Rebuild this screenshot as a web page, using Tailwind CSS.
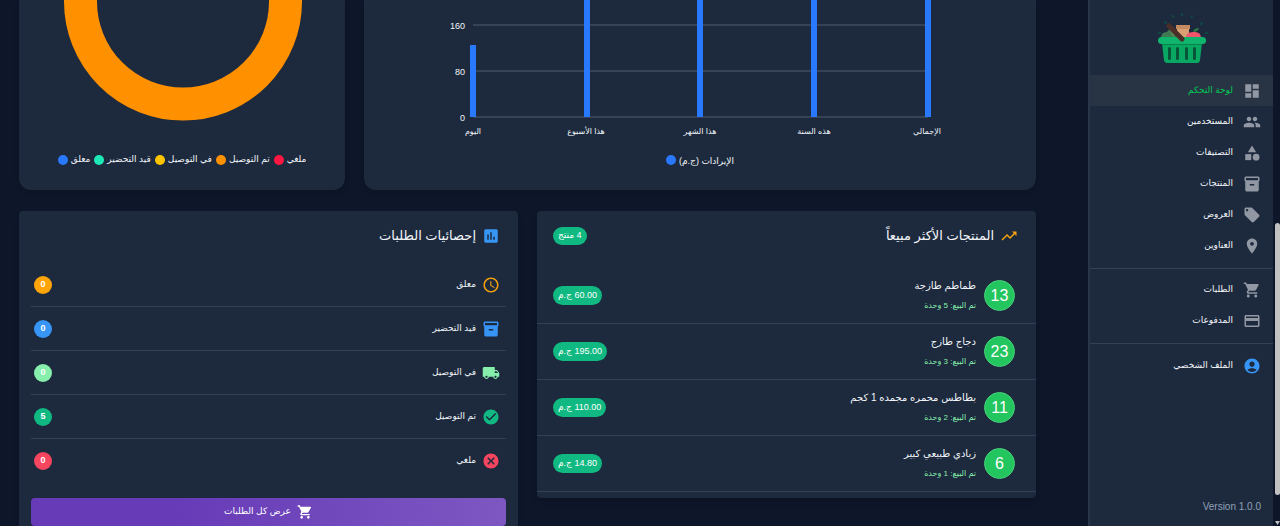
<!DOCTYPE html>
<html lang="ar" dir="rtl">
<head>
<meta charset="utf-8">
<title>لوحة التحكم</title>
<script src="https://cdn.jsdelivr.net/npm/@tailwindcss/browser@4"></script>
</head>
<body class="flex h-screen overflow-hidden bg-[#0e1729] font-['Liberation_Sans','DejaVu_Sans',sans-serif] text-[9px] text-slate-100">
<svg class="hidden" aria-hidden="true">
  <symbol id="dashboard" viewBox="0 0 24 24"><path d="M3 13h8V3H3v10zm0 8h8v-6H3v6zm10 0h8V11h-8v10zm0-18v6h8V3h-8z"/></symbol>
  <symbol id="people" viewBox="0 0 24 24"><path d="M16 11c1.66 0 2.99-1.34 2.99-3S17.660 5 16 5c-1.660 0-3 1.340-3 3s1.340 3 3 3zm-8 0c1.660 0 2.990-1.340 2.990-3S9.660 5 8 5C6.340 5 5 6.340 5 8s1.340 3 3 3zm0 2c-2.330 0-7 1.170-7 3.500V19h14v-2.500c0-2.330-4.670-3.500-7-3.500zm8 0c-.29 0-.62.020-.97.050 1.160.84 1.970 1.970 1.970 3.450V19h6v-2.500c0-2.330-4.670-3.500-7-3.500z"/></symbol>
  <symbol id="category" viewBox="0 0 24 24"><path d="M12 2 6.500 11h11z"/><circle cx="17.500" cy="17.500" r="4.500"/><path d="M3 13.500h8v8H3z"/></symbol>
  <symbol id="box" viewBox="0 0 24 24"><path fill-rule="evenodd" d="M20 2H4c-1 0-2 .9-2 2v3.010c0 .72.43 1.340 1 1.690V20c0 1.100 1.100 2 2 2h14c.9 0 2-.9 2-2V8.700c.57-.35 1-.97 1-1.690V4c0-1.100-1-2-2-2zm-5 12H9v-2h6v2zm5-7H4V4h16v3z"/></symbol>
  <symbol id="tag" viewBox="0 0 24 24"><path d="M21.410 11.580l-9-9C12.050 2.220 11.550 2 11 2H4c-1.100 0-2 .9-2 2v7c0 .55.22 1.050.59 1.420l9 9c.36.36.86.58 1.410.58.55 0 1.050-.22 1.410-.59l7-7c.37-.36.59-.86.59-1.410 0-.55-.23-1.060-.59-1.420zM5.500 7C4.670 7 4 6.330 4 5.500S4.670 4 5.500 4 7 4.670 7 5.500 6.330 7 5.500 7z"/></symbol>
  <symbol id="pin" viewBox="0 0 24 24"><path d="M12 2C8.130 2 5 5.130 5 9c0 5.250 7 13 7 13s7-7.750 7-13c0-3.870-3.130-7-7-7zm0 9.500c-1.380 0-2.500-1.120-2.500-2.500s1.120-2.500 2.500-2.500 2.500 1.120 2.500 2.500-1.120 2.500-2.500 2.500z"/></symbol>
  <symbol id="cart" viewBox="0 0 24 24"><path d="M7 18c-1.100 0-1.990.9-1.990 2S5.900 22 7 22s2-.9 2-2-.9-2-2-2zM1 2v2h2l3.600 7.590-1.350 2.450c-.16.28-.25.61-.25.96 0 1.100.9 2 2 2h12v-2H7.420c-.14 0-.25-.11-.25-.25l.03-.12.9-1.630h7.450c.75 0 1.410-.41 1.750-1.030l3.580-6.490c.08-.14.12-.31.12-.48 0-.55-.45-1-1-1H5.210l-.94-2H1zm16 16c-1.100 0-1.990.9-1.990 2s.89 2 1.990 2 2-.9 2-2-.9-2-2-2z"/></symbol>
  <symbol id="card" viewBox="0 0 24 24"><path d="M20 4H4c-1.110 0-1.990.89-1.990 2L2 18c0 1.110.89 2 2 2h16c1.110 0 2-.89 2-2V6c0-1.110-.89-2-2-2zm0 14H4v-6h16v6zm0-10H4V6h16v2z"/></symbol>
  <symbol id="account" viewBox="0 0 24 24"><path d="M12 2C6.480 2 2 6.480 2 12s4.480 10 10 10 10-4.480 10-10S17.520 2 12 2zm0 4c1.930 0 3.500 1.570 3.500 3.500S13.930 13 12 13s-3.500-1.570-3.500-3.500S10.070 6 12 6zm0 14c-2.030 0-4.430-.82-6.140-2.880C7.550 15.800 9.680 15 12 15s4.450.8 6.140 2.120C16.430 19.180 14.030 20 12 20z"/></symbol>
  <symbol id="trend" viewBox="0 0 24 24"><path d="M16 6l2.290 2.290-4.880 4.880-4-4L2 16.590 3.410 18l6-6 4 4 6.300-6.290L22 12V6z"/></symbol>
  <symbol id="poll" viewBox="0 0 24 24"><path d="M19 3H5c-1.100 0-2 .9-2 2v14c0 1.100.9 2 2 2h14c1.100 0 2-.9 2-2V5c0-1.100-.9-2-2-2zM9 17H7v-7h2v7zm4 0h-2V7h2v10zm4 0h-2v-4h2v4z"/></symbol>
  <symbol id="clock" viewBox="0 0 24 24"><path d="M11.990 2C6.470 2 2 6.480 2 12s4.470 10 9.990 10C17.520 22 22 17.520 22 12S17.520 2 11.990 2zM12 20c-4.420 0-8-3.580-8-8s3.580-8 8-8 8 3.580 8 8-3.580 8-8 8zm.5-13H11v6l5.250 3.150.75-1.230-4.500-2.670z"/></symbol>
  <symbol id="truck" viewBox="0 0 24 24"><path d="M20 8h-3V4H3c-1.100 0-2 .9-2 2v11h2c0 1.660 1.340 3 3 3s3-1.340 3-3h6c0 1.660 1.340 3 3 3s3-1.340 3-3h2v-5l-3-4zM6 18.500c-.83 0-1.500-.67-1.500-1.500s.67-1.500 1.500-1.500 1.500.67 1.500 1.500-.67 1.500-1.500 1.500zm13.500-9l1.960 2.500H17V9.500h2.500zm-1.500 9c-.83 0-1.500-.67-1.500-1.500s.67-1.500 1.500-1.500 1.500.67 1.500 1.500-.67 1.500-1.500 1.500z"/></symbol>
  <symbol id="check" viewBox="0 0 24 24"><path d="M12 2C6.480 2 2 6.480 2 12s4.480 10 10 10 10-4.480 10-10S17.520 2 12 2zm-2 15l-5-5 1.410-1.410L10 14.170l7.590-7.590L19 8l-9 9z"/></symbol>
  <symbol id="cancel" viewBox="0 0 24 24"><path d="M12 2C6.470 2 2 6.470 2 12s4.470 10 10 10 10-4.470 10-10S17.530 2 12 2zm5 13.590L15.590 17 12 13.410 8.410 17 7 15.590 10.590 12 7 8.410 8.410 7 12 10.590 15.590 7 17 8.410 13.410 12 17 15.590z"/></symbol>
</svg>

<!-- page scrollbar -->
<div class="flex w-[7px] shrink-0 flex-col pt-[223px] pl-0.5">
  <div class="h-[272px] rounded-sm bg-[#c1c1c1]"></div>
  <div class="mt-auto mb-px h-1 bg-[#c1c1c1] [clip-path:polygon(0_0,100%_0,50%_100%)]"></div>
</div>

<aside class="flex w-[185px] shrink-0 flex-col border-l-2 border-[#29364a] bg-slate-800">
  <div class="flex h-[75px] justify-center pt-3">
    <svg class="h-[52px] w-[54px]" viewBox="0 0 54 52" role="img" aria-label="سلة">
      <g stroke="#0f4a45" stroke-width="2" stroke-linecap="round"><path d="M18 4l.5 1M27 2v1M37 4l-.5 1M10 10l1 1M47 11l-1 1M4 21h1M52 21h-1"/></g>
      <path d="M6 26q0-6 6-6 1-3 5-2l8 9z" fill="#3f7a52"/><path d="M14 17q5-2 8 3l-4 5z" fill="#5d8f5c"/>
      <path d="M22 13h12v13H22z" fill="#d9a173"/><path d="M21 13h14v4H21z" fill="#c68a61"/>
      <path d="M31 26q0-6 7-6 8-1 8 6z" fill="#f0556b"/><path d="M38 20q1-4 6-4-1 4-6 4z" fill="#2f7d45"/>
      <path d="M7 31h40l-2 17q-.5 3-3 3H12q-2.500 0-3-3z" fill="#09a862"/>
      <rect x="3" y="25" width="48" height="7" rx="3.500" fill="#0fb56c"/>
      <path d="M14 14l13 13" stroke="#4a2e27" stroke-width="5" stroke-linecap="round"/>
      <path d="M7 32h40v1H7z" fill="#07844d"/>
      <g fill="#075436"><rect x="13" y="35" width="3" height="13" rx="1.500"/><rect x="21" y="35" width="3" height="13" rx="1.500"/><rect x="30" y="35" width="3" height="13" rx="1.500"/><rect x="38" y="35" width="3" height="13" rx="1.500"/></g>
    </svg>
  </div>
  <nav class="[&_a]:flex [&_a]:h-[31px] [&_a]:items-center [&_a]:gap-2.5 [&_a]:pr-3 [&_svg]:size-[18px] [&_svg]:fill-[#9298a3]">
    <div class="h-[193px]">
      <a href="#" class="bg-[#283444] text-green-500"><svg><use href="#dashboard"/></svg>لوحة التحكم</a>
      <a href="#"><svg><use href="#people"/></svg>المستخدمين</a>
      <a href="#"><svg><use href="#category"/></svg>التصنيفات</a>
      <a href="#"><svg><use href="#box"/></svg>المنتجات</a>
      <a href="#"><svg><use href="#tag"/></svg>العروض</a>
      <a href="#"><svg><use href="#pin"/></svg>العناوين</a>
    </div>
    <div class="h-[75px] border-t border-slate-700 pt-[5px]">
      <a href="#"><svg><use href="#cart"/></svg>الطلبات</a>
      <a href="#"><svg><use href="#card"/></svg>المدفوعات</a>
    </div>
    <div class="border-t border-slate-700 pt-[6px]">
      <a href="#"><svg class="fill-[#3795f6]!"><use href="#account"/></svg>الملف الشخصي</a>
    </div>
  </nav>
  <p dir="ltr" class="mt-auto pr-3 pb-[11px] text-right text-[10px] leading-4 text-slate-400">Version 1.0.0</p>
</aside>

<main class="flex min-w-0 flex-1 flex-col gap-[21px] pr-[52px] pl-[19px]">
  <div class="flex h-[190px] shrink-0 gap-[19px]">
    <section class="min-w-0 flex-[672] overflow-hidden rounded-b-xl bg-slate-800 shadow-md">
      <svg class="mx-auto h-[190px] w-[672px] max-w-full" viewBox="0 0 672 190" direction="ltr" role="img" aria-label="الإيرادات">
        <g fill="#364256"><rect x="109" y="24" width="455" height="2"/><rect x="109" y="70" width="455" height="2"/><rect x="109" y="116" width="455" height="2"/></g>
        <g fill="#2979ff"><rect x="106" y="45" width="6" height="72"/><rect x="220" y="0" width="6" height="117"/><rect x="333" y="0" width="6" height="117"/><rect x="447" y="0" width="6" height="117"/><rect x="561" y="0" width="6" height="117"/></g>
        <g fill="#f1f5f9" class="text-[9px]" text-anchor="end"><text x="101" y="29">160</text><text x="101" y="75">80</text><text x="101" y="121">0</text></g>
        <g fill="#f1f5f9" class="text-[8px]" text-anchor="middle"><text x="109" y="134">اليوم</text><text x="222" y="134">هذا الأسبوع</text><text x="336" y="134">هذا الشهر</text><text x="450" y="134">هذه السنة</text><text x="563" y="134">الإجمالي</text></g>
        <circle cx="307" cy="160" r="5" fill="#2979ff"/>
        <text class="text-[9px]" fill="#f1f5f9" x="315" y="164">الإيرادات (ج.م)</text>
      </svg>
    </section>
    <section class="flex min-w-0 flex-[326] flex-col items-center overflow-hidden rounded-b-xl bg-slate-800 shadow-md">
      <svg class="h-[152px] w-[240px] shrink-0" viewBox="0 0 240 152" role="img" aria-label="حالة الطلبات"><circle cx="121" cy="1.500" r="102.500" fill="none" stroke="#ff9100" stroke-width="33"/></svg>
      <ul dir="ltr" class="flex h-4 items-center gap-1 whitespace-nowrap [&>li]:flex [&>li]:items-center [&>li]:gap-[3px] [&_i]:size-2.5 [&_i]:rounded-full">
        <li><i class="bg-[#2979ff]"></i>معلق</li>
        <li><i class="bg-[#1de9b6]"></i>قيد التحضير</li>
        <li><i class="bg-[#ffc400]"></i>في التوصيل</li>
        <li><i class="bg-[#ff9100]"></i>تم التوصيل</li>
        <li><i class="bg-[#ff1744]"></i>ملغي</li>
      </ul>
    </section>
  </div>

  <div class="grid grid-cols-2 items-start gap-[19px]">
    <section class="min-w-0 rounded bg-slate-800 pb-1.5 shadow-md">
      <header class="flex h-14 items-center gap-1.5 pr-[18px] pb-1.5 pl-4">
        <svg class="size-[18px] fill-[#f5a30b]"><use href="#trend"/></svg>
        <h2 class="text-[13px]">المنتجات الأكثر مبيعاً</h2>
        <span class="mr-auto flex h-[18px] items-center rounded-full bg-[#10b981] px-[5px] text-white">4 منتج</span>
      </header>
      <ul class="[&>li]:flex [&>li]:h-14 [&>li]:items-center [&>li]:gap-2 [&>li]:border-b [&>li]:border-slate-700 [&>li]:pr-[21px] [&>li]:pl-4 [&_b]:flex [&_b]:size-[31px] [&_b]:items-center [&_b]:justify-center [&_b]:rounded-full [&_b]:border [&_b]:border-[#4ad07c] [&_b]:bg-[#22c55e] [&_b]:text-base [&_b]:font-normal [&_b]:text-white [&_h3]:text-[10px] [&_h3]:leading-5 [&_p]:text-[8px] [&_p]:leading-5 [&_p]:text-[#86efac] [&_span]:mr-auto [&_span]:flex [&_span]:h-[19px] [&_span]:items-center [&_span]:rounded-full [&_span]:bg-[#10b981] [&_span]:px-[5px] [&_span]:text-white pt-px">
        <li><b>13</b><div><h3>طماطم طازجة</h3><p>تم البيع: 5 وحدة</p></div><span>60.00 ج.م</span></li>
        <li><b>23</b><div><h3>دجاج طازج</h3><p>تم البيع: 3 وحدة</p></div><span>195.00 ج.م</span></li>
        <li><b>11</b><div><h3>بطاطس محمره مجمده 1 كجم</h3><p>تم البيع: 2 وحدة</p></div><span>110.00 ج.م</span></li>
        <li><b>6</b><div><h3>زبادي طبيعي كبير</h3><p>تم البيع: 1 وحدة</p></div><span>14.80 ج.م</span></li>
      </ul>
    </section>

    <section class="min-w-0 rounded bg-slate-800 px-3 pb-3 shadow-md">
      <header class="flex h-[52px] items-center gap-1.5 pr-[6px] pb-0.5">
        <svg class="size-[18px] fill-[#3795f6]"><use href="#poll"/></svg>
        <h2 class="text-[13px]">إحصائيات الطلبات</h2>
      </header>
      <ul class="[&>li]:flex [&>li]:h-11 [&>li]:items-center [&>li]:gap-1.5 [&>li]:border-slate-700 [&>li]:pr-[6px] [&>li]:pl-[3px] [&_svg]:size-[18px] [&_b]:mr-auto [&_b]:flex [&_b]:size-[18px] [&_b]:items-center [&_b]:justify-center [&_b]:rounded-full [&_b]:text-white">
        <li class="border-b"><svg class="fill-[#f5a30b]"><use href="#clock"/></svg>معلق<b class="bg-[#ffa50a]">0</b></li>
        <li class="border-b"><svg class="fill-[#3795f6]"><use href="#box"/></svg>قيد التحضير<b class="bg-[#3795f6]">0</b></li>
        <li class="border-b"><svg class="fill-[#86efac]"><use href="#truck"/></svg>في التوصيل<b class="bg-[#86efac]">0</b></li>
        <li class="border-b"><svg class="fill-[#10b981]"><use href="#check"/></svg>تم التوصيل<b class="bg-[#10b981]">5</b></li>
        <li><svg class="fill-[#f5455f]"><use href="#cancel"/></svg>ملغي<b class="bg-[#f5455f]">0</b></li>
      </ul>
      <button type="button" class="mt-[15px] flex h-7 w-full items-center justify-center gap-1.5 rounded-sm bg-linear-to-r from-[#673ab7] from-30% to-[#7e57c2] text-white"><svg class="size-4 fill-white"><use href="#cart"/></svg>عرض كل الطلبات</button>
    </section>
  </div>
</main>
</body>
</html>
